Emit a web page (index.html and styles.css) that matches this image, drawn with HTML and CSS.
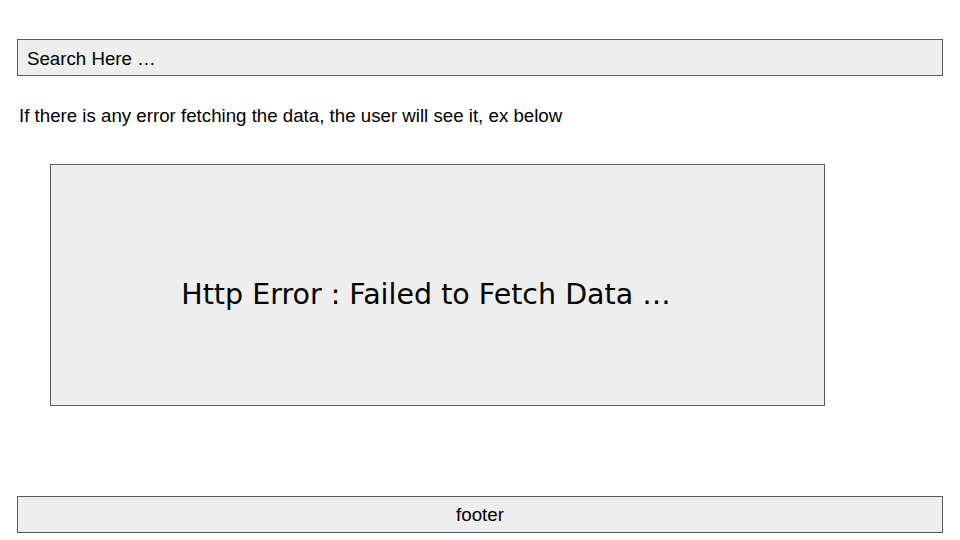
FILE: index.html
```html
<!DOCTYPE html>
<html>
<head>
<meta charset="utf-8">
<link rel="stylesheet" href="styles.css">
</head>
<body>
<div class="page">
  <div class="search">Search Here …</div>
  <p class="note">If there is any error fetching the data, the user will see it, ex below</p>
  <div class="error"><span class="error-text">Http Error : Failed to Fetch Data …</span></div>
  <div class="footer">footer</div>
</div>
</body>
</html>
```
FILE: styles.css
```css
html, body {
  margin: 0;
  padding: 0;
  background: #ffffff;
}
.page {
  width: 960px;
  height: 540px;
  box-sizing: border-box;
  padding: 39px 17px 7px 17px;
  display: flex;
  flex-direction: column;
  font-family: "Liberation Sans", Arial, sans-serif;
  color: #000;
}
.search {
  height: 37px;
  box-sizing: border-box;
  border: 1px solid #5a5a5a;
  background: #eeeeee;
  font-size: 18.7px;
  display: flex;
  align-items: center;
  padding: 2px 0 0 9px;
}
.note {
  margin: 29px 0 0 2px;
  font-size: 18.7px;
  line-height: 21px;
}
.error {
  margin: 38px 0 0 33px;
  width: 775px;
  height: 242px;
  box-sizing: border-box;
  border: 1px solid #5a5a5a;
  background: #eeeeee;
  display: flex;
  align-items: center;
  justify-content: center;
  padding: 18px 23px 0 0;
}
.error-text {
  font-family: "DejaVu Sans", sans-serif;
  font-size: 28.5px;
}
.footer {
  margin-top: auto;
  height: 37px;
  box-sizing: border-box;
  border: 1px solid #5a5a5a;
  background: #eeeeee;
  font-size: 18.7px;
  display: flex;
  align-items: center;
  justify-content: center;
  padding-top: 1px;
}
```
